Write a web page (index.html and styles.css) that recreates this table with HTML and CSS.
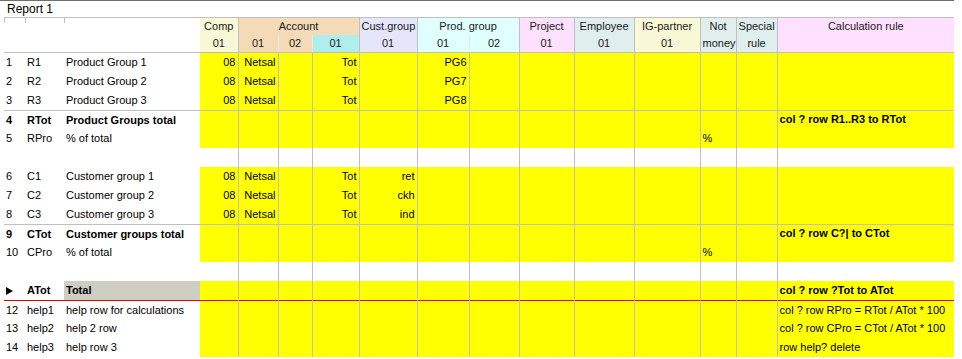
FILE: index.html
```html
<!DOCTYPE html>
<html>
<head>
<meta charset="utf-8">
<title>Report 1</title>
<link rel="stylesheet" href="styles.css">
</head>
<body>
<div class="report">
  <div class="title">Report 1</div>
  <table class="grid">
    <colgroup>
      <col class="w-num"><col class="w-code"><col class="w-name">
      <col class="w-comp"><col class="w-acc1"><col class="w-acc2"><col class="w-acc3">
      <col class="w-cust"><col class="w-prod1"><col class="w-prod2"><col class="w-proj">
      <col class="w-emp"><col class="w-ig"><col class="w-nm"><col class="w-sp"><col class="w-calc">
    </colgroup>
    <thead>
      <tr class="h1">
        <th rowspan="2" class="lab"><div class="tick"></div></th>
        <th rowspan="2" class="lab"><div class="tick"></div></th>
        <th rowspan="2" class="lab"><div class="tick"></div></th>
        <th class="hc c-ig">Comp</th>
        <th colspan="3" class="hc c-acc">Account</th>
        <th class="hc c-cust">Cust.group</th>
        <th colspan="2" class="hc c-prod">Prod. group</th>
        <th class="hc c-proj">Project</th>
        <th class="hc c-emp">Employee</th>
        <th class="hc c-ig">IG-partner</th>
        <th class="hc c-emp">Not</th>
        <th class="hc c-emp">Special</th>
        <th rowspan="2" class="hc c-proj calc-h">Calculation rule</th>
      </tr>
      <tr class="h2">
        <th class="hc c-ig">01</th>
        <th class="hc c-acc sub">01</th>
        <th class="hc c-acc sub">02</th>
        <th class="hc c-turq">01</th>
        <th class="hc c-cust">01</th>
        <th class="hc c-prod sub">01</th>
        <th class="hc c-prod">02</th>
        <th class="hc c-proj">01</th>
        <th class="hc c-emp">01</th>
        <th class="hc c-ig">01</th>
        <th class="hc c-emp">money</th>
        <th class="hc c-emp">rule</th>
      </tr>
    </thead>
    <tbody>
      <tr>
        <td class="num">1</td><td class="code">R1</td><td class="name">Product Group 1</td>
        <td class="d">08</td><td class="d">Netsal</td><td class="d"></td><td class="d">Tot</td>
        <td class="d"></td><td class="d">PG6</td><td class="d"></td><td class="d"></td>
        <td class="d"></td><td class="d"></td><td class="d"></td><td class="d"></td><td class="d calc"></td>
      </tr>
      <tr>
        <td class="num">2</td><td class="code">R2</td><td class="name">Product Group 2</td>
        <td class="d">08</td><td class="d">Netsal</td><td class="d"></td><td class="d">Tot</td>
        <td class="d"></td><td class="d">PG7</td><td class="d"></td><td class="d"></td>
        <td class="d"></td><td class="d"></td><td class="d"></td><td class="d"></td><td class="d calc"></td>
      </tr>
      <tr>
        <td class="num">3</td><td class="code">R3</td><td class="name">Product Group 3</td>
        <td class="d">08</td><td class="d">Netsal</td><td class="d"></td><td class="d">Tot</td>
        <td class="d"></td><td class="d">PG8</td><td class="d"></td><td class="d"></td>
        <td class="d"></td><td class="d"></td><td class="d"></td><td class="d"></td><td class="d calc"></td>
      </tr>
      <tr class="sep bold">
        <td class="num">4</td><td class="code">RTot</td><td class="name">Product Groups total</td>
        <td class="d"></td><td class="d"></td><td class="d"></td><td class="d"></td>
        <td class="d"></td><td class="d"></td><td class="d"></td><td class="d"></td>
        <td class="d"></td><td class="d"></td><td class="d"></td><td class="d"></td><td class="d calc">col ? row R1..R3 to RTot</td>
      </tr>
      <tr>
        <td class="num">5</td><td class="code">RPro</td><td class="name">% of total</td>
        <td class="d"></td><td class="d"></td><td class="d"></td><td class="d"></td>
        <td class="d"></td><td class="d"></td><td class="d"></td><td class="d"></td>
        <td class="d"></td><td class="d"></td><td class="d pct">%</td><td class="d"></td><td class="d calc"></td>
      </tr>
      <tr class="blank">
        <td class="num"></td><td class="code"></td><td class="name"></td>
        <td class="e"></td><td class="e"></td><td class="e"></td><td class="e"></td>
        <td class="e"></td><td class="e"></td><td class="e"></td><td class="e"></td>
        <td class="e"></td><td class="e"></td><td class="e"></td><td class="e"></td><td class="e calc"></td>
      </tr>
      <tr>
        <td class="num">6</td><td class="code">C1</td><td class="name">Customer group 1</td>
        <td class="d">08</td><td class="d">Netsal</td><td class="d"></td><td class="d">Tot</td>
        <td class="d">ret</td><td class="d"></td><td class="d"></td><td class="d"></td>
        <td class="d"></td><td class="d"></td><td class="d"></td><td class="d"></td><td class="d calc"></td>
      </tr>
      <tr>
        <td class="num">7</td><td class="code">C2</td><td class="name">Customer group 2</td>
        <td class="d">08</td><td class="d">Netsal</td><td class="d"></td><td class="d">Tot</td>
        <td class="d">ckh</td><td class="d"></td><td class="d"></td><td class="d"></td>
        <td class="d"></td><td class="d"></td><td class="d"></td><td class="d"></td><td class="d calc"></td>
      </tr>
      <tr>
        <td class="num">8</td><td class="code">C3</td><td class="name">Customer group 3</td>
        <td class="d">08</td><td class="d">Netsal</td><td class="d"></td><td class="d">Tot</td>
        <td class="d">ind</td><td class="d"></td><td class="d"></td><td class="d"></td>
        <td class="d"></td><td class="d"></td><td class="d"></td><td class="d"></td><td class="d calc"></td>
      </tr>
      <tr class="sep bold">
        <td class="num">9</td><td class="code">CTot</td><td class="name">Customer groups total</td>
        <td class="d"></td><td class="d"></td><td class="d"></td><td class="d"></td>
        <td class="d"></td><td class="d"></td><td class="d"></td><td class="d"></td>
        <td class="d"></td><td class="d"></td><td class="d"></td><td class="d"></td><td class="d calc">col ? row C?| to CTot</td>
      </tr>
      <tr>
        <td class="num">10</td><td class="code">CPro</td><td class="name">% of total</td>
        <td class="d"></td><td class="d"></td><td class="d"></td><td class="d"></td>
        <td class="d"></td><td class="d"></td><td class="d"></td><td class="d"></td>
        <td class="d"></td><td class="d"></td><td class="d pct">%</td><td class="d"></td><td class="d calc"></td>
      </tr>
      <tr class="blank">
        <td class="num"></td><td class="code"></td><td class="name"></td>
        <td class="e"></td><td class="e"></td><td class="e"></td><td class="e"></td>
        <td class="e"></td><td class="e"></td><td class="e"></td><td class="e"></td>
        <td class="e"></td><td class="e"></td><td class="e"></td><td class="e"></td><td class="e calc"></td>
      </tr>
      <tr class="bold cur">
        <td class="num"><svg class="ptr" width="8" height="8" viewBox="0 0 8 8"><polygon points="0,0 7,4 0,8" fill="#000"/></svg></td><td class="code">ATot</td><td class="name total">Total</td>
        <td class="d"></td><td class="d"></td><td class="d"></td><td class="d"></td>
        <td class="d"></td><td class="d"></td><td class="d"></td><td class="d"></td>
        <td class="d"></td><td class="d"></td><td class="d"></td><td class="d"></td><td class="d calc">col ? row ?Tot to ATot</td>
      </tr>
      <tr class="after-cur">
        <td class="num">12</td><td class="code">help1</td><td class="name">help row for calculations</td>
        <td class="d"></td><td class="d"></td><td class="d"></td><td class="d"></td>
        <td class="d"></td><td class="d"></td><td class="d"></td><td class="d"></td>
        <td class="d"></td><td class="d"></td><td class="d"></td><td class="d"></td><td class="d calc">col ? row RPro = RTot / ATot * 100</td>
      </tr>
      <tr>
        <td class="num">13</td><td class="code">help2</td><td class="name">help 2 row</td>
        <td class="d"></td><td class="d"></td><td class="d"></td><td class="d"></td>
        <td class="d"></td><td class="d"></td><td class="d"></td><td class="d"></td>
        <td class="d"></td><td class="d"></td><td class="d"></td><td class="d"></td><td class="d calc">col ? row CPro = CTot / ATot * 100</td>
      </tr>
      <tr>
        <td class="num">14</td><td class="code">help3</td><td class="name">help row 3</td>
        <td class="d"></td><td class="d"></td><td class="d"></td><td class="d"></td>
        <td class="d"></td><td class="d"></td><td class="d"></td><td class="d"></td>
        <td class="d"></td><td class="d"></td><td class="d"></td><td class="d"></td><td class="d calc">row help? delete</td>
      </tr>
    </tbody>
  </table>
</div>
</body>
</html>
```
FILE: styles.css
```css
html, body {
  margin: 0;
  padding: 0;
  background: #ffffff;
}
body {
  font-family: "Liberation Sans", Arial, sans-serif;
  font-size: 11px;
  color: #000;
}
.report {
  width: 954px;
  border-top: 1px solid #6e6e6e;
}
.title {
  height: 16px;
  line-height: 16px;
  padding-left: 7px;
  font-size: 12px;
}
.grid {
  margin-left: 4px;
  width: 950px;
  table-layout: fixed;
  border-collapse: collapse;
  border-spacing: 0;
}
.w-num { width: 21px; }
.w-code { width: 39px; }
.w-name { width: 136px; }
.w-comp { width: 38px; }
.w-acc1 { width: 40px; }
.w-acc2 { width: 34px; }
.w-acc3 { width: 47px; }
.w-cust { width: 58px; }
.w-prod1 { width: 52px; }
.w-prod2 { width: 50px; }
.w-proj { width: 55px; }
.w-emp { width: 60px; }
.w-ig { width: 66px; }
.w-nm { width: 36px; }
.w-sp { width: 41px; }
.w-calc { width: 177px; }

.grid th, .grid td {
  padding: 0 2px;
  white-space: nowrap;
  overflow: hidden;
}
.grid thead tr.h1 th {
  border-top: 1px solid #c0c0c0;
  height: 17px;
  line-height: 17px;
}
.grid thead tr.h2 th {
  height: 17px;
  line-height: 17px;
}
.grid thead th {
  font-weight: normal;
  color: #1a1a1a;
  border-bottom: 1px solid #c0c0c0;
}
.grid thead tr.h1 th.hc {
  border-bottom: none;
}
.grid thead tr.h1 th.calc-h {
  border-bottom: 1px solid #c0c0c0;
  vertical-align: top;
}
th.lab {
  padding: 0;
  vertical-align: top;
  background: #fff;
}
.tick {
  height: 5px;
  border-left: 1px solid #c0c0c0;
}
.hc {
  text-align: center;
  border-right: 1px solid #c0c0c0;
}
.hc.sub {
  border-right: 1px solid #e9e9e9;
}
.c-ig { background: #f8f8d6; }
.c-acc { background: #f4dab6; }
.c-turq { background: #afeeee; }
.c-cust { background: #e6e6fa; }
.c-prod { background: #e0ffff; }
.c-proj { background: #ffe1ff; }
.c-emp { background: #e0eeee; }
.calc-h { border-right: none; }

.grid tbody td {
  height: 19px;
  line-height: 19px;
  padding: 0 2px;
}
.grid tbody tr.sep td,
.grid tbody tr.after-cur td {
  height: 18px;
  line-height: 17px;
}
td.num { padding-left: 3px; }
td.d {
  background: #ffff00;
  text-align: right;
  border-right: 1px solid #c0c0c0;
}
td.e {
  background: #fff;
  border-right: 1px solid #c0c0c0;
}
td.calc {
  text-align: left;
  border-right: none;
}
td.pct { text-align: left; vertical-align: top; }
tr.sep td { border-top: 1px solid #c0c0c0; }
tr.bold td { font-weight: bold; }
tr.bold td.calc { vertical-align: top; }
td.total { background: #cfcec3; }
tr.after-cur td { border-top: 1px solid #e00000; }
.ptr { vertical-align: -1px; }
```
